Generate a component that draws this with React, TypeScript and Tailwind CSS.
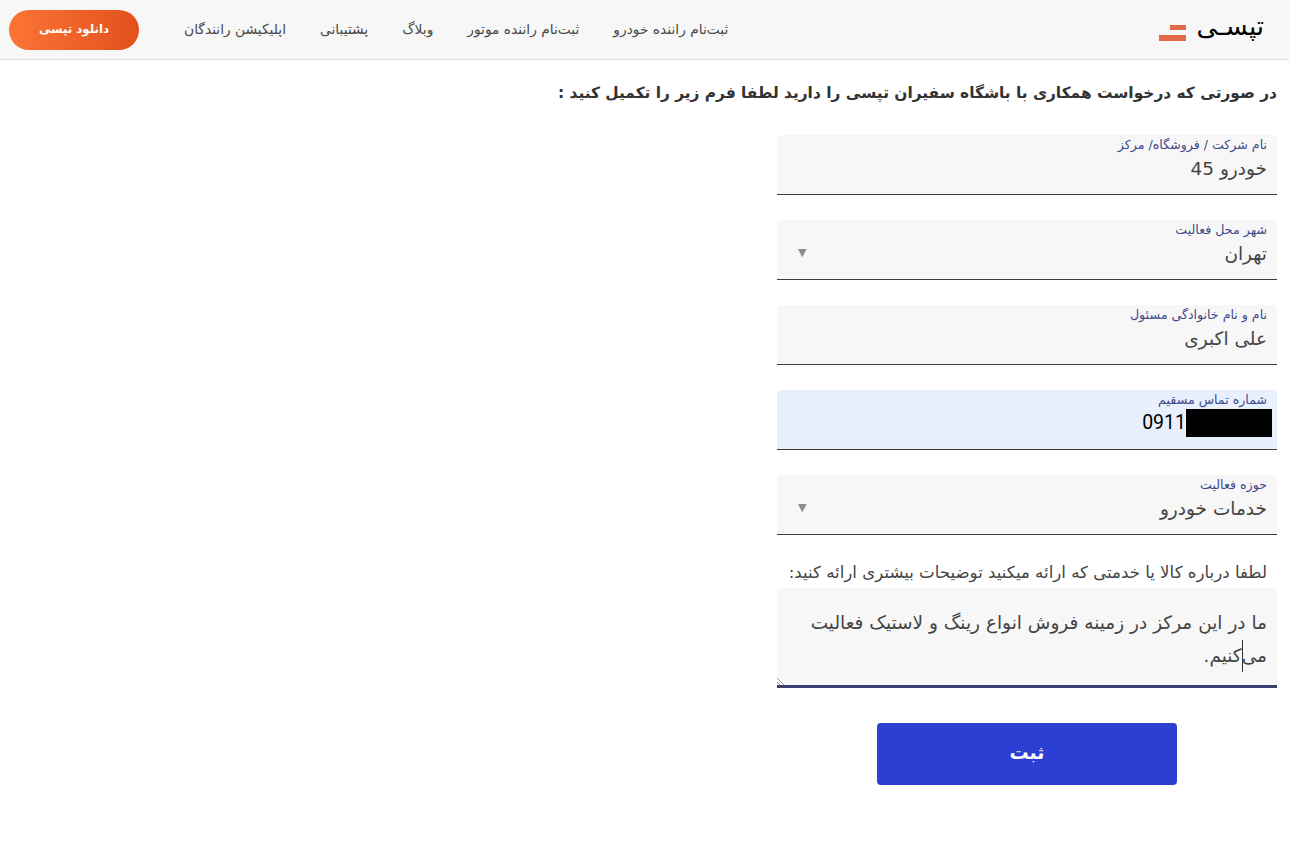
const font = "font-['DejaVu_Sans','Noto_Sans',sans-serif]";

const navItems = ['ثبت‌نام راننده خودرو', 'ثبت‌نام راننده موتور', 'وبلاگ', 'پشتیبانی', 'اپلیکیشن رانندگان'];

function Field({ label, value, select }: { label: string; value: string; select?: boolean }) {
  return (
    <div className="relative h-[60px] rounded-t-[4px] border-b border-[#3c3c3c] bg-[#f7f7f7] px-[10px] pt-[1px]">
      <div className="h-[17px] text-[12.6px] leading-[17px] text-[#3f4a8a]">{label}</div>
      <div className="mt-[1px] h-[30px] text-[18.5px] leading-[30px] text-[#444]">{value}</div>
      {select && <div className="absolute left-[21px] top-[27px] text-[11px] leading-[11px] text-[#8c8c8c]">▼</div>}
    </div>
  );
}

export default function App() {
  return (
    <div dir="rtl" className={`min-h-[855px] bg-white ${font}`}>
      {/* ヘッダー */}
      <header className="flex h-[60px] items-center border-b border-[#dcdcdc] bg-[#f7f7f7] pr-[25px] pl-[9px]">
        <div className="flex items-center gap-[10px]">
          <span className="mb-[8px] text-[26px] leading-none text-black">تپسـی</span>
          <div className="mt-[6px] flex flex-col items-start gap-[5px]">
            <div className="h-[5px] w-[16px] bg-[#e4694a]" />
            <div className="h-[6px] w-[27px] bg-[#e4694a]" />
          </div>
        </div>
        <nav className="mr-auto flex items-center gap-[34px] pl-[45px] text-[13.8px] text-[#4a4a4a]">
          {navItems.map((item) => (
            <span key={item}>{item}</span>
          ))}
        </nav>
        <button className="flex h-[40px] w-[130px] items-center justify-center rounded-full bg-gradient-to-l from-[#e2501c] to-[#fb7435] text-[11.8px] font-bold text-white">
          دانلود تپسی
        </button>
      </header>

      <main className="px-[12px]">
        <h1 className="pt-[20px] text-[15.4px] leading-[26px] font-bold text-[#333]">
          در صورتی که درخواست همکاری با باشگاه سفیران تپسی را دارید لطفا فرم زیر را تکمیل کنید :
        </h1>

        <form className="mt-[29px] w-[500px]">
          <div className="flex flex-col gap-[25px]">
            <Field label="نام شرکت / فروشگاه/ مرکز" value="خودرو 45" />
            <Field label="شهر محل فعالیت" value="تهران" select />
            <Field label="نام و نام خانوادگی مسئول" value="علی اکبری" />

            <div className="h-[60px] rounded-t-[4px] border-b border-[#3c3c3c] bg-[#e8f0fd] px-[10px] pt-[1px]">
              <div className="h-[17px] text-[12.6px] leading-[17px] text-[#3f4a8a]">شماره تماس مسقیم</div>
              <div className="mt-[1px] mr-[-5px] flex h-[28px] items-center">
                <div className="h-[28px] w-[86px] bg-black" />
                <span className="font-['Roboto',sans-serif] text-[19.5px] text-black">0911</span>
              </div>
            </div>

            <Field label="حوزه فعالیت" value="خدمات خودرو" select />
          </div>

          <label className="mt-[28px] block pr-[10px] text-[16.6px] leading-[20px] whitespace-nowrap text-[#444]">
            لطفا درباره کالا یا خدمتی که ارائه میکنید توضیحات بیشتری ارائه کنید:
          </label>

          <div className="relative mt-[5px] h-[100px] rounded-t-[4px] border-b-[3px] border-[#3a4272] bg-[#f7f7f7] px-[10px] pt-[18px] text-[18.5px] leading-[33px] text-[#444]">
            ما در این مرکز در زمینه فروش انواع رینگ و لاستیک فعالیت می‌کنیم.
            <div className="absolute right-[34px] top-[52px] h-[32px] w-px bg-[#333]" />
            <svg className="absolute bottom-0 left-0" width="10" height="10" viewBox="0 0 10 10">
              <path d="M0 3 L7 10 M0 7 L3 10" stroke="#999" strokeWidth="1" />
            </svg>
          </div>

          <div className="mt-[35px] flex justify-center">
            <button type="button" className="h-[62px] w-[300px] rounded-[4px] bg-[#2b40d2] pb-[4px] text-[19px] font-bold text-white">
              ثبت
            </button>
          </div>
        </form>
      </main>
    </div>
  );
}
